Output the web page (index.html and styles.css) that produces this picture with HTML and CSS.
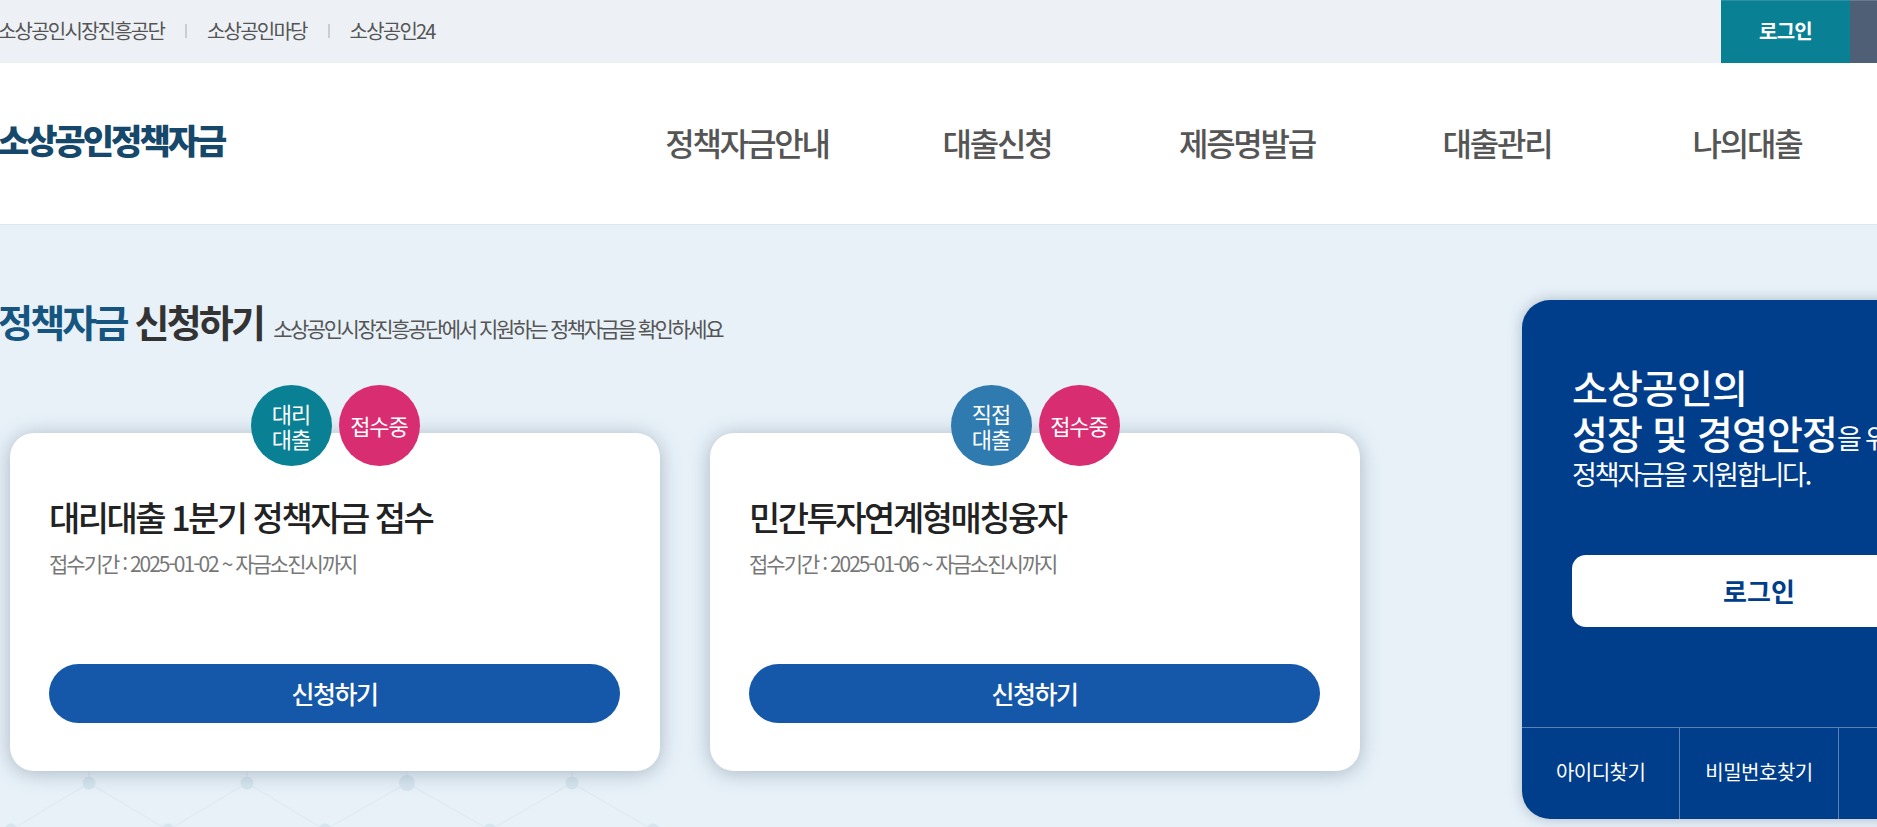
FILE: index.html
```html
<!DOCTYPE html>
<html lang="ko">
<head>
    <meta charset="UTF-8">
    <meta name="viewport" content="width=device-width, initial-scale=1.0">
    <title>소상공인정책자금</title>
    <link rel="stylesheet" href="styles.css">
</head>
<body>
    <div class="topbar">
        <ul class="top-links">
            <li><a href="#">소상공인시장진흥공단</a></li>
            <li><a href="#">소상공인마당</a></li>
            <li><a href="#">소상공인24</a></li>
        </ul>
        <div class="top-buttons">
            <a class="top-login" href="#">로그인</a>
            <span class="top-extra"></span>
        </div>
    </div>

    <header class="header">
        <a class="logo" href="#">소상공인정책자금</a>
        <nav class="gnb">
            <a href="#">정책자금안내</a>
            <a href="#">대출신청</a>
            <a href="#">제증명발급</a>
            <a href="#">대출관리</a>
            <a href="#">나의대출</a>
        </nav>
    </header>

    <main class="main">
        <svg class="bg-net" width="700" height="62" viewBox="0 0 700 62" fill="none" aria-hidden="true">
            <path d="M89 0V18L11 65M89 18L168 65L247 18V0M247 18L325 65L407 18V0M407 18L490 65L572 18V0M572 18L653 65" stroke="#e0ebf4" stroke-width="1.5"/>
            <g fill="#d6e5ee">
                <circle cx="89" cy="18" r="6.5"/>
                <circle cx="247" cy="18" r="6.5"/>
                <circle cx="407" cy="18" r="8"/>
                <circle cx="572" cy="18" r="6.5"/>
                <circle cx="11" cy="65" r="6.5"/>
                <circle cx="168" cy="65" r="6.5"/>
                <circle cx="325" cy="65" r="6.5"/>
                <circle cx="490" cy="65" r="6.5"/>
                <circle cx="653" cy="65" r="6.5"/>
            </g>
        </svg>

        <section class="apply">
            <h2 class="apply-title"><strong><em>정책자금</em> 신청하기</strong> <span>소상공인시장진흥공단에서 지원하는 정책자금을 확인하세요</span></h2>
            <div class="cards">
                <article class="card">
                    <div class="badges">
                        <span class="badge badge-agent">대리<br>대출</span>
                        <span class="badge badge-open">접수중</span>
                    </div>
                    <h3>대리대출 1분기 정책자금 접수</h3>
                    <p>접수기간 : 2025-01-02 ~ 자금소진시까지</p>
                    <a class="btn-apply" href="#">신청하기</a>
                </article>
                <article class="card">
                    <div class="badges">
                        <span class="badge badge-direct">직접<br>대출</span>
                        <span class="badge badge-open">접수중</span>
                    </div>
                    <h3>민간투자연계형매칭융자</h3>
                    <p>접수기간 : 2025-01-06 ~ 자금소진시까지</p>
                    <a class="btn-apply" href="#">신청하기</a>
                </article>
            </div>
        </section>

        <aside class="login-box">
            <div class="login-body">
                <div class="login-text">
                    <p class="login-first"><b>소상공인의</b></p>
                    <p><b>성장 및 경영안정</b>을 위한</p>
                    <p class="login-small">정책자금을 지원합니다.</p>
                </div>
                <a class="btn-login" href="#">로그인</a>
            </div>
            <ul class="login-links">
                <li><a href="#">아이디찾기</a></li>
                <li><a href="#">비밀번호찾기</a></li>
                <li><a href="#">회원가입</a></li>
            </ul>
        </aside>
    </main>
</body>
</html>
```

FILE: styles.css
```css
html, body {
    height: 100%;
}

body {
    margin: 0;
    overflow: hidden;
    background-color: #e8f1f8;
    font-family: "Noto Sans CJK KR", "Noto Sans", sans-serif;
    color: #222;
}

a {
    color: inherit;
    text-decoration: none;
}

ul {
    list-style: none;
    margin: 0;
    padding: 0;
}

.topbar {
    display: flex;
    justify-content: space-between;
    height: 63px;
    background-color: #edf1f5;
}

.top-links {
    display: flex;
    align-items: center;
    margin-left: -2px;
    padding-bottom: 2px;
    font-size: 20px;
    letter-spacing: -1.8px;
    color: #555;
}

.top-links li + li {
    margin-left: 21px;
    padding-left: 22px;
    background: linear-gradient(#c9ced3, #c9ced3) left center / 2px 14px no-repeat;
}

.top-buttons {
    display: flex;
}

.top-login {
    width: 129px;
    line-height: 60px;
    text-align: center;
    font-size: 20px;
    font-weight: 700;
    letter-spacing: -0.8px;
    color: #fff;
    background-color: #0a8095;
    border-top: 1px solid #2d8fa1;
}

.top-extra {
    width: 27px;
    background-color: #4f6076;
    border-top: 1px solid #6a7a8e;
}

.header {
    display: flex;
    align-items: center;
    height: 161px;
    background-color: #fff;
    border-bottom: 1px solid #dfe5ea;
}

.logo {
    width: 624px;
    margin-left: -2px;
    padding-bottom: 8px;
    flex-shrink: 0;
    font-size: 34px;
    font-weight: 900;
    letter-spacing: -3px;
    color: #15486a;
}

.gnb {
    display: flex;
}

.gnb a {
    width: 250px;
    padding-bottom: 4px;
    text-align: center;
    font-size: 32px;
    font-weight: 500;
    letter-spacing: -2.2px;
    color: #555;
}

.main {
    position: relative;
    display: flex;
    width: 1996px;
    padding-top: 75px;
}

.bg-net {
    position: absolute;
    left: 0;
    top: 540px;
}

.apply {
    position: relative;
    width: 1522px;
}

.apply-title {
    display: flex;
    align-items: baseline;
    gap: 10px;
    height: 44px;
    margin: -1px 0 0 -2px;
    line-height: 44px;
    font-weight: 400;
    white-space: nowrap;
}

.apply-title strong {
    font-size: 38px;
    font-weight: 700;
    letter-spacing: -2.8px;
    color: #333;
}

.apply-title em {
    font-style: normal;
    color: #15557f;
}

.apply-title span {
    font-size: 21px;
    letter-spacing: -2.45px;
    color: #555;
}

.cards {
    display: flex;
    gap: 50px;
    margin-top: 90px;
    padding-left: 10px;
}

.card {
    position: relative;
    box-sizing: border-box;
    display: flex;
    flex-direction: column;
    width: 650px;
    height: 338px;
    padding: 60px 40px 48px 39px;
    border-radius: 24px;
    background-color: #fff;
    box-shadow: 0 2px 20px rgba(50, 75, 100, 0.35);
}

.badges {
    position: absolute;
    top: -48px;
    left: 0;
    right: 0;
    display: flex;
    justify-content: center;
    gap: 7px;
}

.badge {
    display: flex;
    align-items: center;
    justify-content: center;
    width: 81px;
    height: 81px;
    border-radius: 50%;
    text-align: center;
    font-size: 22px;
    line-height: 25px;
    letter-spacing: -1px;
    color: #fff;
}

.badge-agent {
    background-color: #0a8095;
}

.badge-direct {
    background-color: #2f7bb0;
}

.badge-open {
    background-color: #d92d72;
}

.card h3 {
    margin: 0;
    font-size: 34px;
    line-height: 48px;
    font-weight: 500;
    letter-spacing: -2.5px;
    color: #222;
}

.card p {
    margin: 7px 0 0;
    font-size: 21px;
    line-height: 30px;
    letter-spacing: -2px;
    color: #777;
}

.btn-apply {
    margin-top: auto;
    line-height: 59px;
    border-radius: 30px;
    text-align: center;
    font-size: 25px;
    font-weight: 500;
    letter-spacing: -1.5px;
    color: #fff;
    background-color: #1558aa;
}

.login-box {
    position: relative;
    display: flex;
    flex-direction: column;
    width: 474px;
    height: 519px;
    flex-shrink: 0;
    border-radius: 28px;
    background-color: #003e8c;
    box-shadow: 0 0 14px rgba(60, 85, 110, 0.35);
    color: #fff;
}

.login-body {
    flex: 1;
    padding: 61px 50px 0;
}

.login-text {
    font-size: 27px;
    letter-spacing: -2.1px;
    white-space: nowrap;
}

.login-text p {
    margin: 0;
    height: 50px;
    line-height: 50px;
}

.login-text p.login-first {
    height: 46px;
}

.login-text p.login-small {
    height: 32px;
    margin-top: 1px;
    line-height: 32px;
}

.login-text b {
    font-size: 39px;
    font-weight: 500;
    letter-spacing: -0.9px;
}

.btn-login {
    display: block;
    margin-top: 65px;
    line-height: 72px;
    border-radius: 14px;
    text-align: center;
    font-size: 26px;
    font-weight: 700;
    letter-spacing: 0;
    color: #003e8c;
    background-color: #fff;
}

.login-links {
    display: flex;
    height: 91px;
    border-top: 1px solid #5d81b6;
}

.login-links li {
    flex: 1;
    line-height: 88px;
    text-align: center;
    font-size: 20px;
    letter-spacing: -0.5px;
}

.login-links li + li {
    border-left: 1px solid #5d81b6;
}
```
